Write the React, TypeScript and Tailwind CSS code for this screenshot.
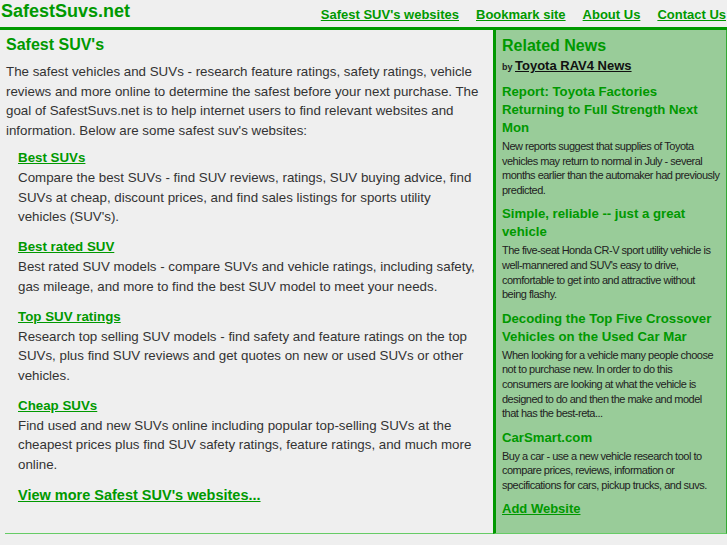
export default function App() {
  const sites = [
    {
      title: "Best SUVs",
      text: "Compare the best SUVs - find SUV reviews, ratings, SUV buying advice, find SUVs at cheap, discount prices, and find sales listings for sports utility vehicles (SUV's).",
    },
    {
      title: "Best rated SUV",
      text: "Best rated SUV models - compare SUVs and vehicle ratings, including safety, gas mileage, and more to find the best SUV model to meet your needs.",
    },
    {
      title: "Top SUV ratings",
      text: "Research top selling SUV models - find safety and feature ratings on the top SUVs, plus find SUV reviews and get quotes on new or used SUVs or other vehicles.",
    },
    {
      title: "Cheap SUVs",
      text: "Find used and new SUVs online including popular top-selling SUVs at the cheapest prices plus find SUV safety ratings, feature ratings, and much more online.",
    },
  ];

  const news = [
    {
      title: "Report: Toyota Factories Returning to Full Strength Next Mon",
      text: "New reports suggest that supplies of Toyota vehicles may return to normal in July - several months earlier than the automaker had previously predicted.",
    },
    {
      title: "Simple, reliable -- just a great vehicle",
      text: "The five-seat Honda CR-V sport utility vehicle is well-mannered and SUV's easy to drive, comfortable to get into and attractive without being flashy.",
    },
    {
      title: "Decoding the Top Five Crossover Vehicles on the Used Car Mar",
      text: "When looking for a vehicle many people choose not to purchase new. In order to do this consumers are looking at what the vehicle is designed to do and then the make and model that has the best-reta...",
    },
    {
      title: "CarSmart.com",
      text: "Buy a car - use a new vehicle research tool to compare prices, reviews, information or specifications for cars, pickup trucks, and suvs.",
    },
  ];

  return (
    <div className="min-h-[545px] w-[727px] bg-[#efefef] font-['Liberation_Sans',Arial,sans-serif] text-[#333]">
      {/* header */}
      <div className="flex items-end justify-between h-[27px] border-b-[3px] border-[#009900] box-content">
        <a className="pl-[1px] pb-[5px] text-[18px] leading-[22px] font-bold text-[#009900]">SafestSuvs.net</a>
        <nav className="flex gap-[17px] pb-[4px] pr-[1px] text-[13px] font-bold leading-[16px]">
          <a className="text-[#009900] underline">Safest SUV's websites</a>
          <a className="text-[#009900] underline">Bookmark site</a>
          <a className="text-[#009900] underline">About Us</a>
          <a className="text-[#009900] underline">Contact Us</a>
        </nav>
      </div>

      <div className="flex">
        {/* main column */}
        <div className="w-[488px] h-[504px] ml-[5px] border-b border-[#66cc66] pl-[1px] pr-[12px]">
          <h1 className="mt-[5px] text-[16px] leading-[20px] font-bold text-[#009900]">Safest SUV's</h1>
          <p className="mt-[7px] text-[13.33px] leading-[19.5px]">
            The safest vehicles and SUVs - research feature ratings, safety ratings, vehicle reviews and more online to determine the safest before your next purchase. The goal of SafestSuvs.net is to help internet users to find relevant websites and information. Below are some safest suv's websites:
          </p>
          <div className="pl-[12px]">
            {sites.map((s, i) => (
              <div key={s.title} className={i === 0 ? "mt-[8px]" : "mt-[10px]"}>
                <a className="block text-[13.33px] leading-[20px] font-bold text-[#009900] underline">{s.title}</a>
                <p className="text-[13.33px] leading-[19.7px]">{s.text}</p>
              </div>
            ))}
            <a className="block mt-[10px] text-[14.5px] leading-[20px] font-bold text-[#009900] underline">
              View more Safest SUV's websites...
            </a>
          </div>
        </div>

        {/* sidebar */}
        <div className="w-[234px] h-[504px] bg-[#99cc99] border-l-[3px] border-r border-b border-l-[#009900] border-r-[#33aa33] border-b-[#66cc66] pl-[6px] pr-[6px] text-[#222]">
          <h2 className="mt-[6px] text-[16px] leading-[20px] font-bold text-[#009900]">Related News</h2>
          <div className="leading-[18px]">
            <span className="text-[9px] font-bold">by </span>
            <a className="text-[13px] font-bold text-[#111] underline">Toyota RAV4 News</a>
          </div>
          {news.map((n, i) => (
            <div key={n.title} className={i === 0 ? "mt-[7px]" : "mt-[8px]"}>
              <a className="block text-[13.2px] leading-[18px] font-bold text-[#009900]">{n.title}</a>
              <p className="mt-[2px] text-[11px] leading-[14.6px] tracking-[-0.5px]">{n.text}</p>
            </div>
          ))}
          <a className="block mt-[7px] text-[13px] leading-[18px] font-bold text-[#009900] underline">Add Website</a>
        </div>
      </div>
    </div>
  );
}
